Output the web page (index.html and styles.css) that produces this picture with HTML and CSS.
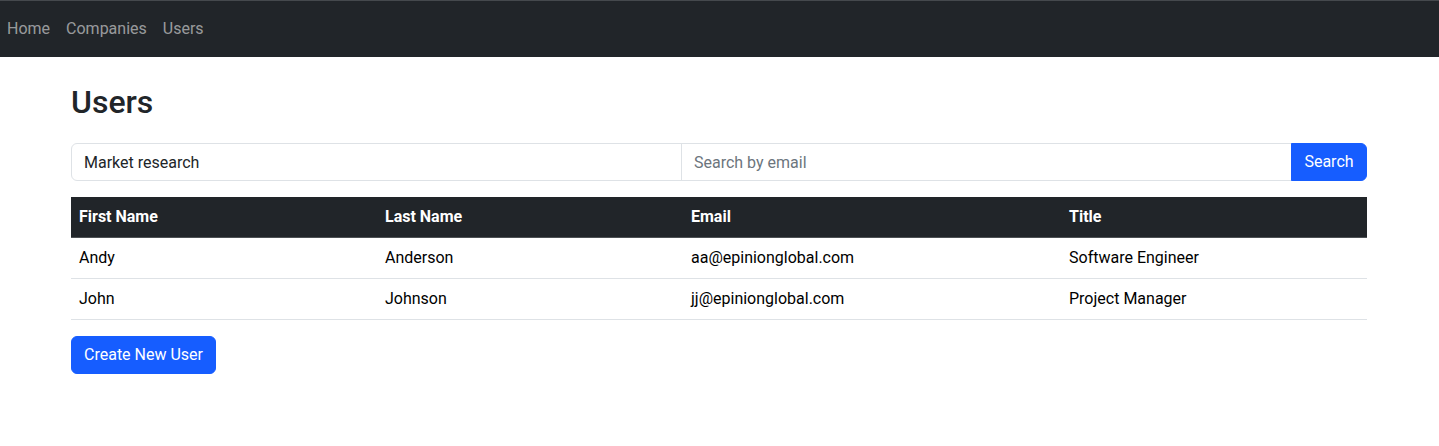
FILE: index.html
```html
<!DOCTYPE html>
<html lang="en">
<head>
<meta charset="utf-8">
<title>Users</title>
<link rel="stylesheet" href="styles.css">
</head>
<body>
<nav class="navbar">
  <a class="nav-link" href="#">Home</a>
  <a class="nav-link" href="#">Companies</a>
  <a class="nav-link" href="#">Users</a>
</nav>
<main class="container">
  <h1 class="title">Users</h1>
  <form class="input-group">
    <input class="form-control first" type="text" value="Market research">
    <input class="form-control middle" type="text" placeholder="Search by email">
    <button class="btn btn-primary last" type="button">Search</button>
  </form>
  <table class="table">
    <colgroup>
      <col class="c1"><col class="c2"><col class="c3"><col class="c4">
    </colgroup>
    <thead>
      <tr><th>First Name</th><th>Last Name</th><th>Email</th><th>Title</th></tr>
    </thead>
    <tbody>
      <tr><td>Andy</td><td>Anderson</td><td>aa@epinionglobal.com</td><td>Software Engineer</td></tr>
      <tr><td>John</td><td>Johnson</td><td>jj@epinionglobal.com</td><td>Project Manager</td></tr>
    </tbody>
  </table>
  <button class="btn btn-primary" type="button">Create New User</button>
</main>
</body>
</html>
```
FILE: styles.css
```css
* { box-sizing: border-box; }
html, body { margin: 0; padding: 0; }
body {
  font-family: Roboto, "Liberation Sans", sans-serif;
  font-size: 16px;
  line-height: 1.5;
  color: #212529;
  background: #fff;
}
.navbar {
  display: flex;
  align-items: center;
  height: 57px;
  background: #212529;
  border-top: 1px solid #45494d;
  padding: 0;
}
.nav-link {
  display: block;
  padding: 8px 8px;
  margin-left: -1px;
  margin-right: 1px;
  color: rgba(255, 255, 255, 0.55);
  text-decoration: none;
  font-size: 16px;
  line-height: 24px;
}
.container {
  width: 1297px;
  margin: 0 auto;
  padding: 0 1px 0 0;
}
.title {
  font-size: 32px;
  font-weight: 500;
  line-height: 1.2;
  margin: 26px 0 22px;
}
.input-group {
  display: flex;
  margin: 0 0 16px;
}
.form-control {
  flex: 1 1 0;
  min-width: 0;
  height: 38px;
  padding: 6px 12px;
  font-family: inherit;
  font-size: 16px;
  line-height: 24px;
  color: #212529;
  background: #fff;
  border: 1px solid #dee2e6;
  outline: none;
}
.form-control::placeholder { color: #6c757d; }
.form-control.first { border-radius: 6px 0 0 6px; }
.form-control.middle { border-radius: 0; margin-left: -1px; }
.btn {
  display: inline-block;
  height: 38px;
  padding: 6px 12px;
  font-family: inherit;
  font-size: 16px;
  line-height: 24px;
  border: 1px solid transparent;
  border-radius: 6px;
  cursor: pointer;
}
.btn-primary {
  background: #165dff;
  border-color: #165dff;
  color: #fff;
}
.btn.last {
  border-radius: 0 6px 6px 0;
  margin-left: -1px;
  width: 76px;
  padding: 6px 0;
}
.table {
  width: 100%;
  border-collapse: collapse;
  table-layout: fixed;
  margin: 0 0 16px;
}
.c1 { width: 306px; }
.c2 { width: 306px; }
.c3 { width: 378px; }
.c4 { width: 306px; }
.table th, .table td {
  text-align: left;
  padding: 8px;
  line-height: 24px;
  vertical-align: top;
}
.table thead th {
  background: #212529;
  color: #fff;
  font-weight: 700;
  border-bottom: 1px solid #4d5154;
}
.table tbody td {
  color: #000;
  border-bottom: 1px solid #dee2e6;
}
```
